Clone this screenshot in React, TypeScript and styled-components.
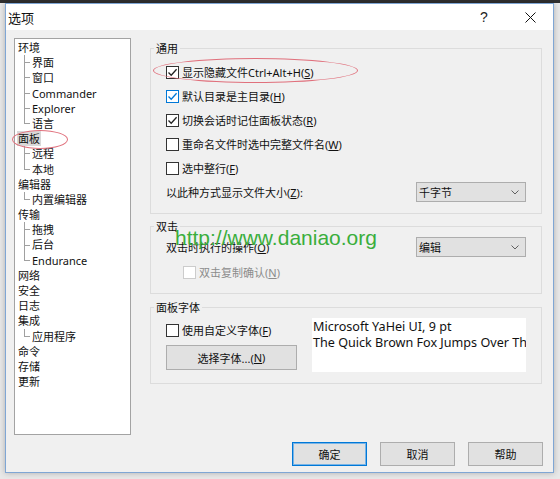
import React from 'react';
import styled, { createGlobalStyle } from 'styled-components';

type TreeNode = { label: string; selected?: boolean; children?: string[] };

const TREE: TreeNode[] = [
  { label: '环境', children: ['界面', '窗口', 'Commander', 'Explorer', '语言'] },
  { label: '面板', selected: true, children: ['远程', '本地'] },
  { label: '编辑器', children: ['内置编辑器'] },
  { label: '传输', children: ['拖拽', '后台', 'Endurance'] },
  { label: '网络' },
  { label: '安全' },
  { label: '日志' },
  { label: '集成', children: ['应用程序'] },
  { label: '命令' },
  { label: '存储' },
  { label: '更新' },
];

const GENERAL = [
  { label: '显示隐藏文件Ctrl+Alt+H', key: 'S', checked: true },
  { label: '默认目录是主目录', key: 'H', checked: true, focused: true },
  { label: '切换会话时记住面板状态', key: 'R', checked: true },
  { label: '重命名文件时选中完整文件名', key: 'W', checked: false },
  { label: '选中整行', key: 'F', checked: false },
];

export default function App() {
  return (
    <>
      <GlobalStyle />
      <S_Window>
        <S_TitleBar>
          <S_Title>选项</S_Title>
          <S_TitleBtn>
            <S_Help>?</S_Help>
          </S_TitleBtn>
          <S_TitleBtn>
            <svg width="11" height="11" viewBox="0 0 11 11">
              <path d="M0.5 0.5 L10.5 10.5 M10.5 0.5 L0.5 10.5" stroke="#111" strokeWidth="1" />
            </svg>
          </S_TitleBtn>
        </S_TitleBar>

        <S_Body>
          <S_Main>
            <S_Tree>
              {TREE.map(node => (
                <React.Fragment key={node.label}>
                  <S_TreeRow>
                    <S_TreeLabel $selected={node.selected}>{node.label}</S_TreeLabel>
                  </S_TreeRow>
                  {node.children?.map((child, idx) => (
                    <S_TreeRow key={child}>
                      <S_Connector $last={idx === node.children!.length - 1} />
                      <S_TreeLabel>{child}</S_TreeLabel>
                    </S_TreeRow>
                  ))}
                </React.Fragment>
              ))}
            </S_Tree>

            <S_Column>
              <S_Group>
                <S_Legend>通用</S_Legend>
                <S_GroupContent $top={3}>
                  {GENERAL.map(item => (
                    <S_Row key={item.key}>
                      <CheckBox checked={item.checked} focused={item.focused} />
                      <span>
                        {item.label}(<u>{item.key}</u>)
                      </span>
                    </S_Row>
                  ))}
                  <S_Row $between>
                    <span>
                      以此种方式显示文件大小(<u>Z</u>):
                    </span>
                    <Select value="千字节" />
                  </S_Row>
                </S_GroupContent>
              </S_Group>

              <S_Group $gap={12}>
                <S_Legend>双击</S_Legend>
                <S_GroupContent $top={0}>
                  <S_Row $between>
                    <span>
                      双击时执行的操作(<u>O</u>)
                    </span>
                    <Select value="编辑" />
                  </S_Row>
                  <S_Row $indent={17} $disabled style={{ marginTop: 1 }}>
                    <CheckBox disabled />
                    <span>
                      双击复制确认(<u>N</u>)
                    </span>
                  </S_Row>
                </S_GroupContent>
              </S_Group>

              <S_Group $gap={13} $bottom={11}>
                <S_Legend>面板字体</S_Legend>
                <S_FontContent>
                  <S_FontLeft>
                    <S_Row>
                      <CheckBox />
                      <span>
                        使用自定义字体(<u>F</u>)
                      </span>
                    </S_Row>
                    <S_Button $width={131} $height={25}>
                      选择字体...(<u>N</u>)
                    </S_Button>
                  </S_FontLeft>
                  <S_Preview>
                    <div>Microsoft YaHei UI, 9 pt</div>
                    <div>The Quick Brown Fox Jumps Over The Lazy Dog</div>
                  </S_Preview>
                </S_FontContent>
              </S_Group>
            </S_Column>
          </S_Main>

          <S_Footer>
            <S_Button $width={75} $height={24} $default>
              确定
            </S_Button>
            <S_Button $width={75} $height={24}>
              取消
            </S_Button>
            <S_Button $width={75} $height={24}>
              帮助
            </S_Button>
          </S_Footer>
        </S_Body>

        <S_Watermark>http://www.daniao.org</S_Watermark>
        <S_Ellipse style={{ left: 6, top: 126, width: 56, height: 19 }} />
        <S_Ellipse style={{ left: 147, top: 54, width: 205, height: 25 }} />
      </S_Window>
    </>
  );
}

function CheckBox({
  checked,
  focused,
  disabled,
}: {
  checked?: boolean;
  focused?: boolean;
  disabled?: boolean;
}) {
  const color = focused ? '#0078d7' : '#222';
  return (
    <S_Box $focused={focused} $disabled={disabled}>
      {checked && (
        <svg width="11" height="11" viewBox="0 0 11 11">
          <path d="M1.5 5.5 L4.2 8.3 L9.6 2.2" fill="none" stroke={color} strokeWidth="1.3" />
        </svg>
      )}
    </S_Box>
  );
}

function Select({ value }: { value: string }) {
  return (
    <S_Select>
      <span>{value}</span>
      <svg width="8" height="5" viewBox="0 0 8 5">
        <path d="M0.5 0.5 L4 4 L7.5 0.5" fill="none" stroke="#606060" strokeWidth="1" />
      </svg>
    </S_Select>
  );
}

const GlobalStyle = createGlobalStyle`
  html, body {
    margin: 0;
    padding: 0;
  }
  body {
    width: 560px;
    height: 479px;
    overflow: hidden;
    background: linear-gradient(#2f2f2f 0 3px, #e8e8e8 3px);
    font-family: "Noto Sans", "Noto Sans CJK SC", sans-serif;
    font-size: 11px;
    color: #111;
  }
  u {
    text-decoration: underline;
    text-underline-offset: 1px;
  }
`;

const S_Window = styled.div`
  position: relative;
  box-sizing: border-box;
  margin: 3px 0 0 5px;
  width: 549px;
  height: 470px;
  border: 1px solid #7fa6d4;
  background: #f0f0f0;
  display: flex;
  flex-direction: column;
  box-shadow: 0 0 6px rgba(0, 0, 0, 0.25);
`;

const S_TitleBar = styled.div`
  height: 26px;
  flex-shrink: 0;
  background: #fff;
  display: flex;
  align-items: center;
`;

const S_Title = styled.span`
  flex: 1;
  padding-left: 2px;
  font-size: 13px;
  font-family: "Noto Sans CJK SC", sans-serif;
`;

const S_TitleBtn = styled.div`
  width: 46px;
  height: 26px;
  display: flex;
  align-items: center;
  justify-content: center;
`;

const S_Help = styled.span`
  font-family: "Liberation Sans", sans-serif;
  font-size: 14px;
  color: #222;
`;

const S_Body = styled.div`
  flex: 1;
  display: flex;
  flex-direction: column;
  padding: 8px 10px 0 8px;
`;

const S_Main = styled.div`
  display: flex;
  align-items: flex-start;
  gap: 19px;
`;

const S_Tree = styled.div`
  box-sizing: border-box;
  width: 117px;
  height: 397px;
  background: #fff;
  border: 1px solid #a3a3a3;
  padding-top: 1px;
`;

const S_TreeRow = styled.div`
  display: flex;
  height: 15.2px;
  line-height: 15.2px;
  padding-left: 2px;
`;

const S_TreeLabel = styled.span<{ $selected?: boolean }>`
  padding: 0 1px;
  background: ${({ $selected }) => ($selected ? '#d9d9d9' : 'transparent')};
`;

const S_Connector = styled.span<{ $last?: boolean }>`
  width: 14px;
  flex-shrink: 0;
  background:
    linear-gradient(#a0a0a0, #a0a0a0) 7px 0 / 1px ${({ $last }) => ($last ? '50%' : '100%')} no-repeat,
    linear-gradient(#a0a0a0, #a0a0a0) 7px 50% / 6px 1px no-repeat;
`;

const S_Column = styled.div`
  width: 392px;
  display: flex;
  flex-direction: column;
`;

const S_Group = styled.div<{ $gap?: number; $bottom?: number }>`
  margin-top: ${({ $gap }) => $gap ?? 10}px;
  border: 1px solid #dcdcdc;
  padding: 0 15px ${({ $bottom }) => $bottom ?? 9}px 15px;
`;

const S_Legend = styled.div`
  width: fit-content;
  margin: -8px 0 0 -12px;
  padding: 0 2px;
  height: 16px;
  line-height: 16px;
  background: #f0f0f0;
`;

const S_GroupContent = styled.div<{ $top: number }>`
  margin-top: ${({ $top }) => $top}px;
  display: flex;
  flex-direction: column;
`;

const S_Row = styled.div<{ $between?: boolean; $indent?: number; $disabled?: boolean }>`
  height: 24px;
  display: flex;
  align-items: center;
  justify-content: ${({ $between }) => ($between ? 'space-between' : 'flex-start')};
  gap: 3px;
  padding-left: ${({ $indent }) => $indent ?? 0}px;
  color: ${({ $disabled }) => ($disabled ? '#8c8c8c' : 'inherit')};
`;

const S_Box = styled.span<{ $focused?: boolean; $disabled?: boolean }>`
  box-sizing: border-box;
  width: 13px;
  height: 13px;
  flex-shrink: 0;
  display: flex;
  align-items: center;
  justify-content: center;
  background: #fff;
  border: 1px solid
    ${({ $focused, $disabled }) => ($disabled ? '#cccccc' : $focused ? '#0078d7' : '#333')};
`;

const S_Select = styled.div`
  box-sizing: border-box;
  width: 110px;
  height: 20px;
  display: flex;
  align-items: center;
  justify-content: space-between;
  padding: 0 6px 0 2px;
  background: #e1e1e1;
  border: 1px solid #adadad;
`;

const S_FontContent = styled.div`
  margin-top: 2px;
  display: flex;
  gap: 15px;
`;

const S_FontLeft = styled.div`
  display: flex;
  flex-direction: column;
`;

const S_Button = styled.div<{ $width: number; $height: number; $default?: boolean }>`
  box-sizing: border-box;
  width: ${({ $width }) => $width}px;
  height: ${({ $height }) => $height}px;
  display: flex;
  align-items: center;
  justify-content: center;
  background: #e1e1e1;
  border: 1px solid ${({ $default }) => ($default ? '#0078d7' : '#adadad')};
  box-shadow: ${({ $default }) => ($default ? 'inset 0 0 0 1px #79b4e6' : 'none')};
  margin-top: 3px;
`;

const S_Preview = styled.div`
  flex: 1;
  height: 53px;
  background: #fff;
  padding: 1px 0 0 1px;
  overflow: hidden;
  white-space: nowrap;
  font-family: "Noto Sans", sans-serif;
  font-size: 12.6px;
  line-height: 16px;
`;

const S_Footer = styled.div`
  margin-top: 4px;
  display: flex;
  justify-content: flex-end;
  gap: 13px;
`;

const S_Watermark = styled.div`
  position: absolute;
  left: 169px;
  top: 223px;
  font-family: "Liberation Sans", Arial, sans-serif;
  font-size: 21px;
  line-height: 21px;
  color: #3aae3c;
`;

const S_Ellipse = styled.div`
  position: absolute;
  box-sizing: border-box;
  border: 1px solid #e0707c;
  border-radius: 50%;
  pointer-events: none;
`;
